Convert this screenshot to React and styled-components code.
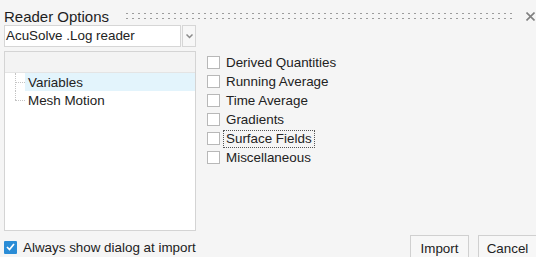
import React from 'react';
import styled, {createGlobalStyle} from "styled-components";

const GlobalStyle = createGlobalStyle`
    html, body {
        margin: 0;
        padding: 0;
        background: #f5f5f5;
    }
    body {
        font-family: "Liberation Sans", Arial, sans-serif;
        color: #222;
    }
`

const Dialog = styled.div`
    width: 536px;
    height: 257px;
    overflow: hidden;
    box-sizing: border-box;
    padding-left: 4px;
    display: flex;
    flex-direction: column;
`

const TitleBar = styled.div`
    height: 25px;
    display: flex;
    align-items: flex-start;
`

const Title = styled.div`
    font-size: 15px;
    line-height: 17px;
    margin-top: 8px;
    color: #1e1e1e;
`

const Grip = styled.div`
    flex: 1;
    height: 10px;
    margin: 11px 0 0 15px;
    background-image: radial-gradient(circle, #9c9c9c 0.8px, transparent 1.1px);
    background-size: 6px 5px;
    background-position: 0 0;
`

const Close = styled.div`
    width: 9px;
    height: 9px;
    margin: 12px 1px 0 10px;
    display: flex;
`

const Body = styled.div`
    display: flex;
    gap: 11px;
`

const LeftCol = styled.div`
    width: 192px;
    display: flex;
    flex-direction: column;
    gap: 4px;
`

const Combo = styled.div`
    height: 22px;
    display: flex;
    gap: 1px;
`

const ComboField = styled.div`
    flex: 1;
    background: #fff;
    border: 1px solid #d6d6d6;
    font-size: 13.4px;
    line-height: 20px;
    padding-left: 1px;
    color: #222;
`

const ComboButton = styled.div`
    width: 12px;
    border: 1px solid #d6d6d6;
    background: #f7f7f7;
    display: flex;
    align-items: center;
    justify-content: center;
`

const Tree = styled.div`
    height: 180px;
    background: #fff;
    border: 1px solid #d4d4d4;
    box-sizing: border-box;
`

const TreeHeader = styled.div`
    height: 20px;
    background: #f3f3f3;
    border-bottom: 1px solid #e4e4e4;
`

const TreeRow = styled.div`
    height: 18px;
    display: flex;
    padding-left: 10px;
`

const TreeLine = styled.div`
    width: 10px;
    position: relative;
    &:before {
        content: "";
        position: absolute;
        left: 0;
        top: 0;
        height: ${p => p.last ? '50%' : '100%'};
        border-left: 1px dotted #c4c4c4;
    }
    &:after {
        content: "";
        position: absolute;
        left: 0;
        top: 50%;
        width: 10px;
        border-top: 1px dotted #c4c4c4;
    }
`

const TreeLabel = styled.div`
    flex: 1;
    display: flex;
    align-items: center;
    font-size: 13.4px;
    padding-left: 3px;
    background: ${p => p.selected ? '#e3f4fc' : 'transparent'};
    color: #222;
`

const Options = styled.div`
    display: flex;
    flex-direction: column;
    padding-top: 28px;
`

const OptionRow = styled.div`
    height: 19px;
    display: flex;
    align-items: center;
    gap: 6px;
    font-size: 13.4px;
    color: #222;
`

const Box = styled.div`
    width: 11px;
    height: 11px;
    border: 1px solid #b8b8b8;
    background: #fff;
    flex: none;
`

const OptionText = styled.span`
    line-height: 14px;
    outline: ${p => p.focused ? '1px dotted #555' : 'none'};
    outline-offset: 1px;
    padding: 0 1px;
    margin-left: -1px;
`

const Footer = styled.div`
    margin-top: 4px;
    display: flex;
    align-items: flex-start;
`

const AlwaysShow = styled.div`
    height: 20px;
    display: flex;
    align-items: center;
    gap: 6px;
    font-size: 13.4px;
    color: #222;
    flex: 1;
    margin-top: 2px;
`

const CheckedBox = styled.div`
    width: 13px;
    height: 13px;
    background: #2a8cd6;
    border-radius: 1px;
    display: flex;
    align-items: center;
    justify-content: center;
`

const Buttons = styled.div`
    display: flex;
    gap: 9px;
    margin-right: -1px;
`

const Button = styled.div`
    width: 59px;
    height: 24px;
    box-sizing: border-box;
    border: 1px solid #d0d0d0;
    background: #f7f7f7;
    font-size: 13.4px;
    line-height: 16px;
    display: flex;
    justify-content: center;
    padding-top: 5px;
    color: #222;
`

const options = [
    'Derived Quantities',
    'Running Average',
    'Time Average',
    'Gradients',
    'Surface Fields',
    'Miscellaneous',
]

const App = () => {
    return (
        <>
            <GlobalStyle/>
            <Dialog>
                <TitleBar>
                    <Title>Reader Options</Title>
                    <Grip/>
                    <Close>
                        <svg width="9" height="9" viewBox="0 0 9 9">
                            <path d="M0.5 0.5 L8.5 8.5 M8.5 0.5 L0.5 8.5" stroke="#808080" strokeWidth="1.6"/>
                        </svg>
                    </Close>
                </TitleBar>
                <Body>
                    <LeftCol>
                        <Combo>
                            <ComboField>AcuSolve .Log reader</ComboField>
                            <ComboButton>
                                <svg width="7" height="5" viewBox="0 0 7 5">
                                    <path d="M0.5 0.5 L3.5 3.5 L6.5 0.5" stroke="#8a8a8a" strokeWidth="1.5" fill="none"/>
                                </svg>
                            </ComboButton>
                        </Combo>
                        <Tree>
                            <TreeHeader/>
                            <TreeRow>
                                <TreeLine/>
                                <TreeLabel selected>Variables</TreeLabel>
                            </TreeRow>
                            <TreeRow>
                                <TreeLine last/>
                                <TreeLabel>Mesh Motion</TreeLabel>
                            </TreeRow>
                        </Tree>
                    </LeftCol>
                    <Options>
                        {options.map(o => (
                            <OptionRow key={o}>
                                <Box/>
                                <OptionText focused={o === 'Surface Fields'}>{o}</OptionText>
                            </OptionRow>
                        ))}
                    </Options>
                </Body>
                <Footer>
                    <AlwaysShow>
                        <CheckedBox>
                            <svg width="9" height="8" viewBox="0 0 9 8">
                                <path d="M1 4 L3.5 6.5 L8 1" stroke="#fff" strokeWidth="1.7" fill="none"/>
                            </svg>
                        </CheckedBox>
                        Always show dialog at import
                    </AlwaysShow>
                    <Buttons>
                        <Button>Import</Button>
                        <Button>Cancel</Button>
                    </Buttons>
                </Footer>
            </Dialog>
        </>
    )
}

export default App
